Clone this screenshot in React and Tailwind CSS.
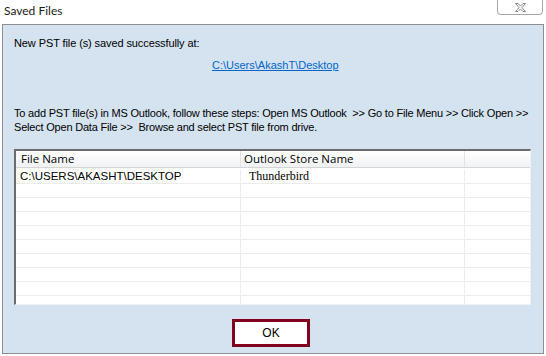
import React from 'react';

const rows = [
  { file: 'C:\\USERS\\AKASHT\\DESKTOP', store: 'Thunderbird' },
  {}, {}, {}, {}, {}, {}, {}, {}, {},
];

const CloseGlyph = () => (
  <svg width="11" height="9" viewBox="0 0 11 9" fill="none">
    <path
      d="M0.5 0.5 H3 L5.5 3 L8 0.5 H10.5 L7 4.5 L10.5 8.5 H8 L5.5 6 L3 8.5 H0.5 L4 4.5 Z"
      stroke="#8a8a8a"
      strokeWidth="1"
      fill="#f6f6f6"
    />
  </svg>
);

const App = () => {
  return (
    <div className="w-[546px] h-[356px] bg-white overflow-hidden font-['Liberation_Sans',Arial,sans-serif] text-[11px] text-black">
      {/* Title bar */}
      <div className="h-[24px] flex items-start justify-between">
        <div className="pl-[4px] pt-[2px] font-['Lato',sans-serif] text-[12px] leading-[18px] text-[#1b1b1b]">
          Saved Files
        </div>
        <div className="mr-[3px] w-[46px] h-[15px] border border-t-0 border-[#a7a7a7] rounded-b-[4px] bg-white flex items-center justify-center">
          <CloseGlyph />
        </div>
      </div>

      {/* Dialog body */}
      <div className="ml-[2px] w-[542px] h-[330px] border border-[#8e8e8e] bg-[#d5e3f1] flex flex-col pl-[11px]">
        <p className="pt-[11px] leading-[14px] tracking-[-0.1px]">New PST file (s) saved successfully at:</p>

        <div className="mt-[8px] pl-[198px] leading-[14px]">
          <span className="text-[#0066cc] underline">C:\Users\AkashT\Desktop</span>
        </div>

        <p className="mt-[34px] leading-[14px] whitespace-nowrap tracking-[-0.2px]">
          To add PST file(s) in MS Outlook, follow these steps: Open MS Outlook&nbsp; &gt;&gt; Go to File Menu &gt;&gt; Click Open &gt;&gt;
          <br />
          Select Open Data File &gt;&gt;&nbsp; Browse and select PST file from drive.
        </p>

        {/* List view */}
        <div className="mt-[15px] w-[517px] h-[156px] bg-white border-t-2 border-l-2 border-r border-b border-t-[#6b6b6b] border-l-[#6b6b6b] border-r-[#f2f2f2] border-b-[#f2f2f2] overflow-hidden">
          <div className="flex h-[17px] border-b border-[#d5d5d5] bg-gradient-to-b from-white to-[#f1f2f4] font-['Open_Sans',sans-serif] text-[11.5px] leading-[16px]">
            <div className="w-[225px] shrink-0 border-r border-[#e2e2e2] pl-[5px]">File Name</div>
            <div className="w-[224px] shrink-0 border-r border-[#e2e2e2] pl-[3px]">Outlook Store Name</div>
            <div className="flex-1" />
          </div>
          <div className="h-[2px]" />
          {rows.map((r, i) => (
            <div key={i} className="flex h-[14px] border-b border-[#ececec] leading-[13px]">
              <div className="w-[225px] shrink-0 border-r border-[#ececec] pl-[4px] text-[11.5px]">{r.file}</div>
              <div className="w-[224px] shrink-0 border-r border-[#ececec] pl-[8px] font-['Liberation_Serif',serif] text-[12px]">
                {r.store}
              </div>
              <div className="flex-1" />
            </div>
          ))}
        </div>

        <div className="mt-[14px] ml-[218px]">
          <button className="w-[78px] h-[28px] border-[3px] border-[#810020] bg-white font-['Liberation_Sans',Arial,sans-serif] font-normal text-[12px] leading-[20px] text-black">
            OK
          </button>
        </div>
      </div>
    </div>
  );
};

export default App;
